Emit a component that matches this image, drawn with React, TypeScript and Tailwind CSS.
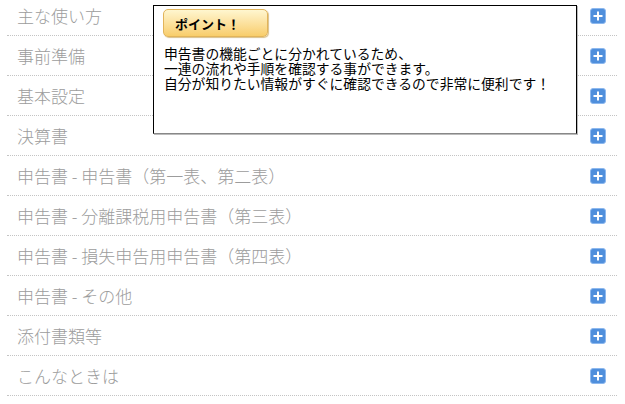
import React from "react";

const items = [
  "主な使い方",
  "事前準備",
  "基本設定",
  "決算書",
  "申告書 - 申告書（第一表、第二表）",
  "申告書 - 分離課税用申告書（第三表）",
  "申告書 - 損失申告用申告書（第四表）",
  "申告書 - その他",
  "添付書類等",
  "こんなときは",
];

function PlusIcon() {
  return (
    <svg width="16" height="16" viewBox="0 0 16 16">
      <rect x="0.5" y="0.5" width="15" height="15" rx="2.5" fill="#4f8fdc" stroke="#8db8ee" />
      <rect x="7" y="3.5" width="2" height="9" fill="#fff" />
      <rect x="3.5" y="7" width="9" height="2" fill="#fff" />
    </svg>
  );
}

export default function App() {
  return (
    <div
      className="relative w-[625px] h-[404px] overflow-hidden bg-white"
      style={{ fontFamily: '"Noto Sans CJK JP", "Noto Sans", sans-serif' }}
    >
      <div className="-mt-[4px] ml-[7px] w-[610px]">
        {items.map((t) => (
          <div
            key={t}
            className="flex items-center justify-between h-[40px] border-b border-dotted border-[#c4c4c4] pl-[10px] pr-[11px]"
          >
            <span className="text-[17px] leading-none font-light text-[#9c9c9c]">{t}</span>
            <PlusIcon />
          </div>
        ))}
      </div>

      <div className="absolute left-[153px] top-[5px] w-[424px] h-[129px] bg-white border border-black border-b-[#888] shadow-[1px_1px_0_#bbb]">
        <div className="ml-[9px] mt-[3px] w-[105px] h-[28px] rounded-[5px] border border-[#e2b45a] bg-gradient-to-b from-[#fff6cf] to-[#f8cd6a] shadow-[1px_1px_1px_#d9c08a] flex items-center pl-[11px]">
          <span className="text-[13px] font-bold text-black leading-none">ポイント！</span>
        </div>
        <div className="ml-[10px] mt-[9px] flex flex-col text-[13.8px] leading-[15px] text-black">
          <span>申告書の機能ごとに分かれているため、</span>
          <span>一連の流れや手順を確認する事ができます。</span>
          <span>自分が知りたい情報がすぐに確認できるので非常に便利です！</span>
        </div>
      </div>
    </div>
  );
}
